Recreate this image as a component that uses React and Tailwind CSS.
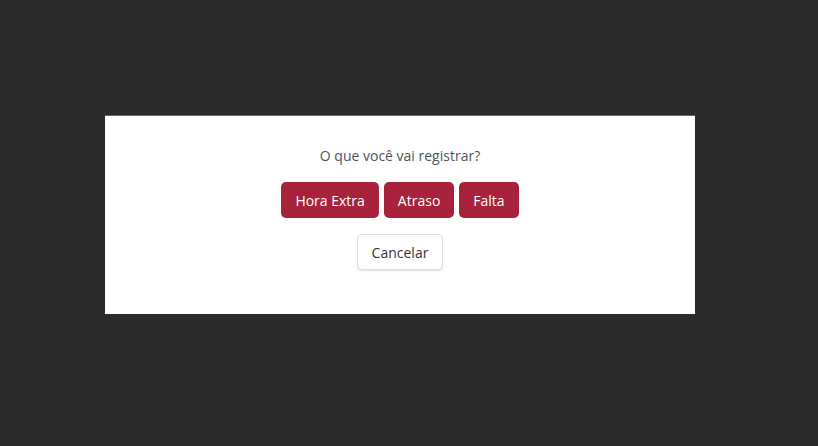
export default function App() {
  return (
    <div className="flex h-[446px] w-full items-center justify-center bg-[#2b2b2d] pb-4 pr-[18px] font-['Open_Sans',sans-serif]">
      <div className="flex h-[198px] w-[590px] flex-col items-center bg-white pt-[30px] shadow-[0_-1px_0_#6b6b6b]">
        <p className="text-[14px] font-medium leading-5 text-[#4f5459]">O que você vai registrar?</p>
        <div className="mt-4 flex gap-[5px]">
          <ActionButton>Hora Extra</ActionButton>
          <ActionButton>Atraso</ActionButton>
          <ActionButton>Falta</ActionButton>
        </div>
        <button className="mt-4 h-9 rounded-[5px] border border-[#dcdcdc] bg-white px-[14px] text-[14px] font-medium text-[#333] shadow-[0_1px_2px_rgba(0,0,0,0.12)]">
          Cancelar
        </button>
      </div>
    </div>
  );
}

function ActionButton({ children }) {
  return (
    <button className="h-9 rounded-[5px] bg-[#a8223c] px-[14px] text-[14px] font-medium text-white">
      {children}
    </button>
  );
}
